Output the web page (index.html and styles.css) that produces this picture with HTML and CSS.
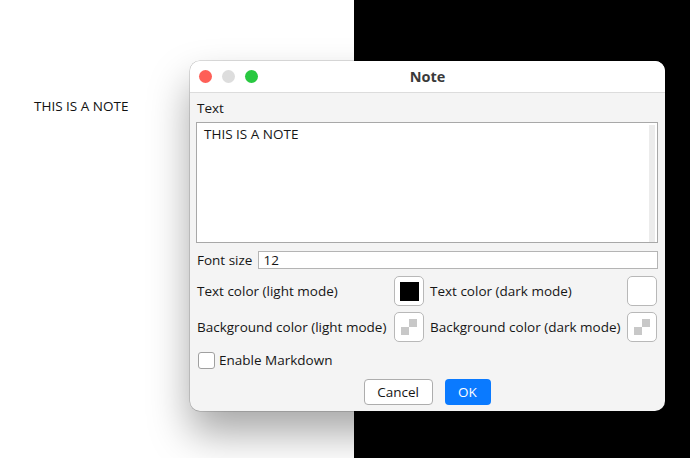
FILE: index.html
```html
<!DOCTYPE html>
<html>
<head>
<meta charset="utf-8">
<link rel="stylesheet" href="styles.css">
</head>
<body>
<div class="desk">
  <div class="canvas-note">THIS IS A NOTE</div>
  <div class="dialog">
    <div class="titlebar">
      <div class="lights">
        <span class="light red"></span>
        <span class="light gray"></span>
        <span class="light green"></span>
      </div>
      <div class="title">Note</div>
    </div>
    <div class="body">
      <div class="label">Text</div>
      <div class="textarea">
        <div class="ta-text">THIS IS A NOTE</div>
        <div class="ta-scroll"></div>
      </div>
      <div class="fontrow">
        <span class="lbl">Font size</span>
        <div class="input">12</div>
      </div>
      <div class="colorgrid">
        <span class="lbl">Text color (light mode)</span>
        <div class="swatch"><span class="fill black"></span></div>
        <span class="lbl">Text color (dark mode)</span>
        <div class="swatch"></div>
        <span class="lbl">Background color (light mode)</span>
        <div class="swatch"><svg width="18" height="18" viewBox="0 0 18 18"><rect x="9" y="1" width="8" height="8" fill="#c8c8c8"/><rect x="1" y="9" width="8" height="8" fill="#c8c8c8"/></svg></div>
        <span class="lbl">Background color (dark mode)</span>
        <div class="swatch"><svg width="18" height="18" viewBox="0 0 18 18"><rect x="9" y="1" width="8" height="8" fill="#c8c8c8"/><rect x="1" y="9" width="8" height="8" fill="#c8c8c8"/></svg></div>
      </div>
      <div class="checkrow">
        <span class="checkbox"></span>
        <span class="lbl">Enable Markdown</span>
      </div>
      <div class="buttons">
        <div class="btn cancel">Cancel</div>
        <div class="btn ok">OK</div>
      </div>
    </div>
  </div>
</div>
</body>
</html>
```
FILE: styles.css
```css
html, body {
  margin: 0;
  padding: 0;
}
body {
  width: 690px;
  height: 458px;
  overflow: hidden;
  font-family: "Open Sans", "Noto Sans", sans-serif;
  font-size: 13.5px;
  color: #161616;
}
.desk {
  position: relative;
  width: 690px;
  height: 458px;
  background: linear-gradient(to right, #ffffff 0, #ffffff 354px, #000000 354px, #000000 100%);
  padding-top: 61px;
  padding-left: 190px;
  box-sizing: border-box;
}
.canvas-note {
  position: absolute;
  left: 34px;
  top: 97px;
  font-size: 13.5px;
  color: #111;
}
.dialog {
  width: 475px;
  height: 350px;
  border-radius: 10px;
  background: #f4f4f4;
  overflow: hidden;
  box-shadow: 0 22px 40px rgba(0,0,0,0.35), 0 0 0 0.5px rgba(0,0,0,0.25);
  display: flex;
  flex-direction: column;
}
.titlebar {
  height: 31px;
  background: #ffffff;
  border-bottom: 1px solid #dcdcdc;
  position: relative;
  display: flex;
  align-items: center;
  justify-content: center;
}
.lights {
  position: absolute;
  left: 9px;
  top: 9px;
  display: flex;
  gap: 10px;
}
.light {
  width: 13px;
  height: 13px;
  border-radius: 50%;
}
.red { background: #fe5f57; }
.gray { background: #dddddd; }
.green { background: #28c840; }
.title {
  font-weight: 700;
  font-size: 14.5px;
  color: #3a3a3a;
}
.body {
  padding: 6px 7px 0 6px;
  display: flex;
  flex-direction: column;
}
.label {
  line-height: 18px;
  margin-left: 1px;
}
.textarea {
  height: 119px;
  border: 1px solid #a8a8a8;
  background: #fff;
  margin-top: 5px;
  display: flex;
  justify-content: space-between;
}
.ta-text {
  padding: 2px 7px;
  line-height: 18px;
}
.ta-scroll {
  width: 6px;
  background: #ececec;
  margin: 2px 2px 0 0;
}
.fontrow {
  display: flex;
  align-items: center;
  margin-top: 8px;
  gap: 6px;
  margin-left: 1px;
}
.input {
  flex: 1;
  height: 16px;
  line-height: 16px;
  border: 1px solid #b4b4b4;
  background: #fff;
  padding-left: 4px;
}
.colorgrid {
  display: grid;
  grid-template-columns: 1fr 30px 1fr 30px;
  column-gap: 6px;
  row-gap: 6px;
  align-items: center;
  margin-top: 7px;
  margin-left: 1px;
  margin-right: 1px;
}
.swatch {
  width: 28px;
  height: 28px;
  border: 1px solid #b8b8b8;
  border-radius: 5px;
  background: #fff;
  display: flex;
  align-items: center;
  justify-content: center;
}
.fill {
  width: 19px;
  height: 19px;
}
.black { background: #000; }
.checkrow {
  display: flex;
  align-items: center;
  gap: 4px;
  margin-top: 9px;
  margin-left: 2px;
  line-height: 18px;
}
.checkbox {
  width: 15px;
  height: 15px;
  border: 1px solid #a0a0a0;
  border-radius: 3px;
  background: #fff;
}
.buttons {
  display: flex;
  justify-content: center;
  gap: 12px;
  margin-top: 10px;
}
.btn {
  height: 26px;
  line-height: 26px;
  border-radius: 4px;
  text-align: center;
  box-sizing: border-box;
}
.cancel {
  width: 69px;
  background: #fff;
  border: 1px solid #adadad;
  line-height: 24px;
}
.ok {
  width: 46px;
  background: #0a7aff;
  color: #fff;
}
```
